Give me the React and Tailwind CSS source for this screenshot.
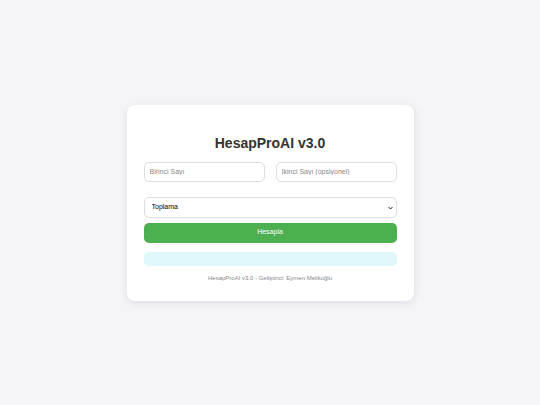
import { useState } from "react"

function App() {
    const [a, setA] = useState("")
    const [b, setB] = useState("")
    const [op, setOp] = useState("toplama")

    return (
        <div className="min-h-screen bg-[#f4f4f9] flex items-center justify-center" style={{ fontFamily: '"Liberation Sans", Arial, sans-serif' }}>
            <div className="bg-white w-[287px] rounded-[8px] shadow-[0_2px_10px_rgba(0,0,0,0.1)] px-[17px] pt-[30px] pb-[19px]">
                <h1 className="text-[14px] leading-[16px] font-bold text-center text-[#333] mb-[11px]">HesapProAI v3.0</h1>

                <div className="flex gap-[11px]">
                    <input
                        type="number"
                        placeholder="Birinci Sayı"
                        value={a}
                        onChange={(e) => setA(e.target.value)}
                        className="flex-1 min-w-0 h-[20px] border border-[#ddd] rounded-[5px] px-[5px] text-[7px] text-[#333] placeholder:text-[#888] focus:outline-none"
                    />
                    <input
                        type="number"
                        placeholder="İkinci Sayı (opsiyonel)"
                        value={b}
                        onChange={(e) => setB(e.target.value)}
                        className="flex-1 min-w-0 h-[20px] border border-[#ddd] rounded-[5px] px-[5px] text-[7px] text-[#333] placeholder:text-[#888] focus:outline-none"
                    />
                </div>

                <div className="relative mt-[15px]">
                    <select
                        value={op}
                        onChange={(e) => setOp(e.target.value)}
                        className="block appearance-none w-full h-[21px] border border-[#ddd] rounded-[5px] pl-[7px] pr-[12px] text-[7px] text-black bg-white focus:outline-none"
                    >
                        <option value="toplama">Toplama</option>
                        <option value="cikarma">Çıkarma</option>
                        <option value="carpma">Çarpma</option>
                        <option value="bolme">Bölme</option>
                    </select>
                    <svg className="absolute right-[4px] top-[9px] pointer-events-none" width="5" height="4" viewBox="0 0 10 7">
                        <path d="M1 1.5 L5 5.5 L9 1.5" fill="none" stroke="#222" strokeWidth="2" />
                    </svg>
                </div>

                <button className="block mt-[5px] w-full h-[20px] bg-[#4caf50] text-white text-[7px] rounded-[5px]">
                    Hesapla
                </button>

                <div className="mt-[9px] h-[14px] bg-[#e0f7fa] rounded-[5px]"></div>

                <p className="mt-[8px] text-center text-[6px] leading-[8px] text-[#888]">HesapProAI v3.0 - Geliştirici: Eymen Melikoğlu</p>
            </div>
        </div>
    )
}

export default App
